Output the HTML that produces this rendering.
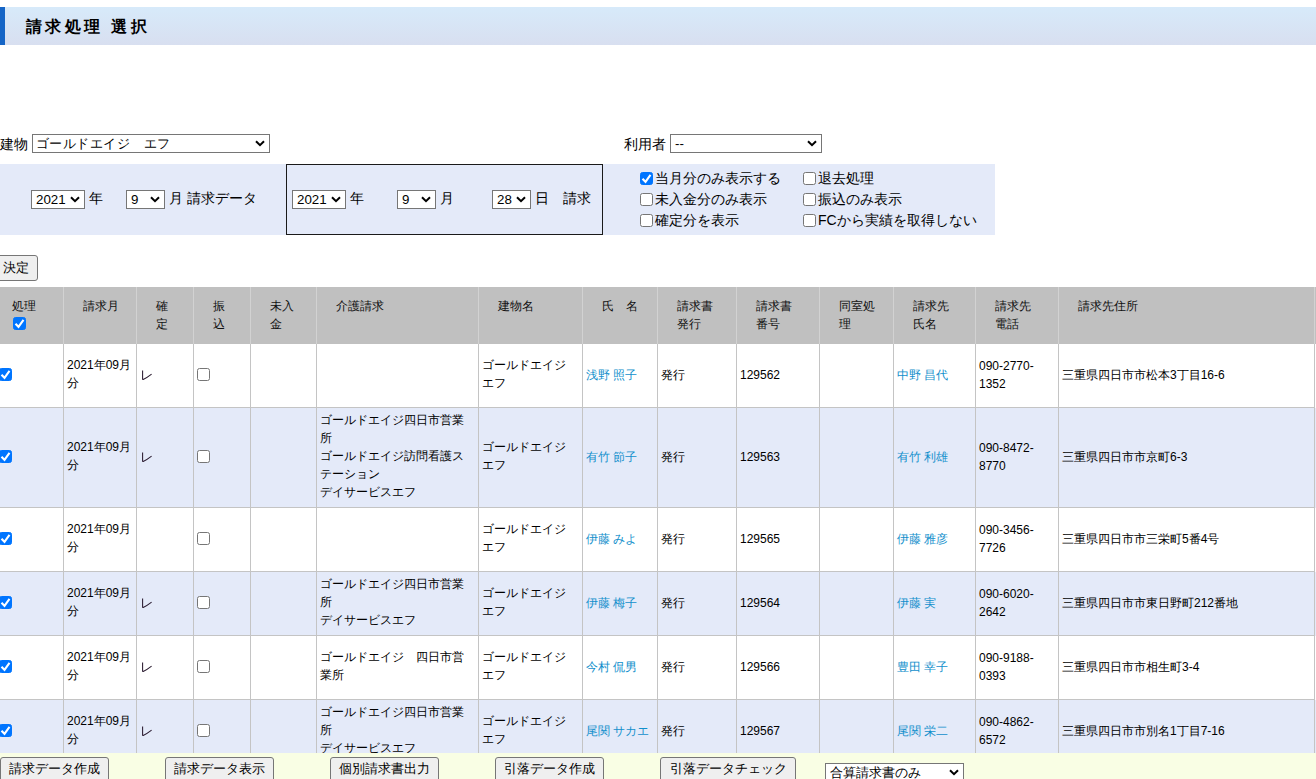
<!DOCTYPE html>
<html><head><meta charset="utf-8"><style>
html,body{margin:0;padding:0;background:#fff;width:1316px;height:779px;overflow:hidden;position:relative;
font-family:"Liberation Sans",sans-serif;color:#000}
.abs{position:absolute;white-space:nowrap}
.hdr{position:absolute;left:0;top:7px;width:1316px;height:38px;background:linear-gradient(#d7eafa,#d8dff0)}
.hdr .bar{position:absolute;left:0;top:0;width:5px;height:38px;background:#1565c6}
.hdr .t{position:absolute;left:26px;top:10px;font-size:16px;font-weight:bold;letter-spacing:3.4px;line-height:20px;color:#000}
.lbl{position:absolute;font-size:14px;line-height:20px;white-space:nowrap}
.sel{position:absolute;box-sizing:border-box;border:1px solid #767676;background:#fff;white-space:nowrap;overflow:hidden}
.sel .st{position:absolute;left:4px;top:0;line-height:17px}
.sel .chw{position:absolute;right:4px;top:5px;width:10px;height:7px}
.chev{display:block}
.panel{position:absolute;left:0;top:164px;width:995px;height:71px;background:#e4eaf9}
.box{position:absolute;left:286px;top:164px;width:317px;height:71px;box-sizing:border-box;border:1px solid #1a1a1a}
.cb{display:inline-block;box-sizing:border-box;width:13px;height:13px;border:1px solid #767676;border-radius:2.5px;background:#fff;vertical-align:top;position:relative}
.cb.on{background:#0075ff;border-color:#0075ff}
.cb svg{position:absolute;left:-1px;top:-1px}
.ck{position:absolute}
.btn{position:absolute;box-sizing:border-box;border:1px solid #767676;border-radius:3px;background:#efefef;font-size:13.33px;line-height:22px;height:26px;white-space:nowrap;text-align:center}
.tbl{position:absolute;left:0;top:0}
.row{position:absolute;left:0;width:1316px}
.cell{position:absolute;top:0;box-sizing:border-box;font-size:12px;line-height:18px;white-space:nowrap;overflow:hidden}
.hrow{background:#c0c0c0;color:#111}
.hrow .cell{border-right:1px solid #d2d2d2;height:57px;padding:10px 0 0 19px}
.hrow .cb{margin-top:2px;margin-left:1px}
.brow .cb{position:relative;top:1px}
.brow .cell{border-right:1px solid #c4c4c4;border-bottom:1px solid #c4c4c4;display:flex;align-items:center;padding-left:3px}
.brow .one{position:relative;top:-1px}
.brow .multi{position:relative;top:-2px}
.lk{color:#118fcc}
.re{color:#7a1080}
.foot{position:absolute;left:0;top:753px;width:1316px;height:26px;background:#f9fee4}
</style></head><body>

<div class="hdr"><div class="bar"></div><div class="t">請求処理 選択</div></div>
<div class="lbl" style="left:0px;top:134px">建物</div>
<div class="sel " style="left:32px;top:134px;width:238px;height:19px"><span class="st" style="font-size:13.33px"><span style="position:relative;left:-1px;letter-spacing:0.45px">ゴールドエイジ　エフ</span></span><span class="chw"><svg class="chev" width="10" height="7" viewBox="0 0 10 7"><path d="M1 1.2 L5 5.2 L9 1.2" fill="none" stroke="#000" stroke-width="2"/></svg></span></div>
<div class="lbl" style="left:624px;top:134px">利用者</div>
<div class="sel " style="left:670px;top:134px;width:152px;height:19px"><span class="st" style="font-size:13.33px">--</span><span class="chw"><svg class="chev" width="10" height="7" viewBox="0 0 10 7"><path d="M1 1.2 L5 5.2 L9 1.2" fill="none" stroke="#000" stroke-width="2"/></svg></span></div>
<div class="panel"></div><div class="box"></div>
<div class="sel " style="left:31px;top:190px;width:54px;height:19px"><span class="st" style="font-size:13.33px">2021</span><span class="chw"><svg class="chev" width="10" height="7" viewBox="0 0 10 7"><path d="M1 1.2 L5 5.2 L9 1.2" fill="none" stroke="#000" stroke-width="2"/></svg></span></div>
<div class="lbl" style="left:89px;top:188px">年</div>
<div class="sel " style="left:126px;top:190px;width:39px;height:19px"><span class="st" style="font-size:13.33px">9</span><span class="chw"><svg class="chev" width="10" height="7" viewBox="0 0 10 7"><path d="M1 1.2 L5 5.2 L9 1.2" fill="none" stroke="#000" stroke-width="2"/></svg></span></div>
<div class="lbl" style="left:169px;top:188px">月 請求データ</div>
<div class="sel " style="left:292px;top:190px;width:54px;height:19px"><span class="st" style="font-size:13.33px">2021</span><span class="chw"><svg class="chev" width="10" height="7" viewBox="0 0 10 7"><path d="M1 1.2 L5 5.2 L9 1.2" fill="none" stroke="#000" stroke-width="2"/></svg></span></div>
<div class="lbl" style="left:350px;top:188px">年</div>
<div class="sel " style="left:397px;top:190px;width:39px;height:19px"><span class="st" style="font-size:13.33px">9</span><span class="chw"><svg class="chev" width="10" height="7" viewBox="0 0 10 7"><path d="M1 1.2 L5 5.2 L9 1.2" fill="none" stroke="#000" stroke-width="2"/></svg></span></div>
<div class="lbl" style="left:440px;top:188px">月</div>
<div class="sel " style="left:492px;top:190px;width:39px;height:19px"><span class="st" style="font-size:13.33px">28</span><span class="chw"><svg class="chev" width="10" height="7" viewBox="0 0 10 7"><path d="M1 1.2 L5 5.2 L9 1.2" fill="none" stroke="#000" stroke-width="2"/></svg></span></div>
<div class="lbl" style="left:535px;top:188px">日</div>
<div class="lbl" style="left:563px;top:188px">請求</div>
<div class="ck" style="left:640px;top:172px"><span class="cb on"><svg width="13" height="13" viewBox="0 0 13 13"><path d="M2.5 6.8 L5.5 9.8 L10.5 2.9" fill="none" stroke="#fff" stroke-width="2.1"/></svg></span></div>
<div class="lbl" style="left:655px;top:168px">当月分のみ表示する</div>
<div class="ck" style="left:640px;top:193px"><span class="cb"></span></div>
<div class="lbl" style="left:655px;top:189px">未入金分のみ表示</div>
<div class="ck" style="left:640px;top:214px"><span class="cb"></span></div>
<div class="lbl" style="left:655px;top:210px">確定分を表示</div>
<div class="ck" style="left:803px;top:172px"><span class="cb"></span></div>
<div class="lbl" style="left:818px;top:168px">退去処理</div>
<div class="ck" style="left:803px;top:193px"><span class="cb"></span></div>
<div class="lbl" style="left:818px;top:189px">振込のみ表示</div>
<div class="ck" style="left:803px;top:214px"><span class="cb"></span></div>
<div class="lbl" style="left:818px;top:210px">FCから実績を取得しない</div>
<div class="btn" style="left:-6px;top:255px;width:44px;padding-left:8px;font-size:13.33px;line-height:24px;text-align:left">決定</div>
<div class="row hrow" style="top:287px;height:57px">
<div class="cell" style="left:-7px;width:71px">処理<br><span class="cb on"><svg width="13" height="13" viewBox="0 0 13 13"><path d="M2.5 6.8 L5.5 9.8 L10.5 2.9" fill="none" stroke="#fff" stroke-width="2.1"/></svg></span></div>
<div class="cell" style="left:64px;width:73px">請求月</div>
<div class="cell" style="left:137px;width:57px">確<br>定</div>
<div class="cell" style="left:194px;width:57px">振<br>込</div>
<div class="cell" style="left:251px;width:66px">未入<br>金</div>
<div class="cell" style="left:317px;width:162px">介護請求</div>
<div class="cell" style="left:479px;width:104px">建物名</div>
<div class="cell" style="left:583px;width:75px">氏　名</div>
<div class="cell" style="left:658px;width:79px">請求書<br>発行</div>
<div class="cell" style="left:737px;width:83px">請求書<br>番号</div>
<div class="cell" style="left:820px;width:74px">同室処<br>理</div>
<div class="cell" style="left:894px;width:82px">請求先<br>氏名</div>
<div class="cell" style="left:976px;width:83px">請求先<br>電話</div>
<div class="cell" style="left:1059px;width:256px">請求先住所</div>
</div>
<div class="row brow" style="top:344px;height:64px;background:#fff">
<div class="cell" style="left:-7px;width:71px;height:64px;padding-left:6px;"><div><span class="cb on"><svg width="13" height="13" viewBox="0 0 13 13"><path d="M2.5 6.8 L5.5 9.8 L10.5 2.9" fill="none" stroke="#fff" stroke-width="2.1"/></svg></span></div></div>
<div class="cell" style="left:64px;width:73px;height:64px;"><div class="multi">2021年09月<br>分</div></div>
<div class="cell" style="left:137px;width:57px;height:64px;"><div><span class="re"><svg width="12" height="12" viewBox="0 0 12 12" style="display:block;margin-top:1px"><path d="M2.6 0.5 V9.4 L3.2 9.5 Q7 7.8 11.6 4.2" fill="none" stroke="#2a1a30" stroke-width="1.05"/></svg></span></div></div>
<div class="cell" style="left:194px;width:57px;height:64px;padding-left:3px;"><div><span class="cb"></span></div></div>
<div class="cell" style="left:251px;width:66px;height:64px;"><div></div></div>
<div class="cell" style="left:317px;width:162px;height:64px;"><div></div></div>
<div class="cell" style="left:479px;width:104px;height:64px;"><div class="multi">ゴールドエイジ<br>エフ</div></div>
<div class="cell" style="left:583px;width:75px;height:64px;"><div class="one"><span class="lk">浅野 照子</span></div></div>
<div class="cell" style="left:658px;width:79px;height:64px;"><div class="one">発行</div></div>
<div class="cell" style="left:737px;width:83px;height:64px;"><div class="one">129562</div></div>
<div class="cell" style="left:820px;width:74px;height:64px;"><div></div></div>
<div class="cell" style="left:894px;width:82px;height:64px;"><div class="one"><span class="lk">中野 昌代</span></div></div>
<div class="cell" style="left:976px;width:83px;height:64px;"><div class="one">090-2770-<br>1352</div></div>
<div class="cell" style="left:1059px;width:256px;height:64px;"><div class="one">三重県四日市市松本3丁目16-6</div></div>
</div>
<div class="row brow" style="top:408px;height:100px;background:#e4eaf9">
<div class="cell" style="left:-7px;width:71px;height:100px;padding-left:6px;"><div><span class="cb on"><svg width="13" height="13" viewBox="0 0 13 13"><path d="M2.5 6.8 L5.5 9.8 L10.5 2.9" fill="none" stroke="#fff" stroke-width="2.1"/></svg></span></div></div>
<div class="cell" style="left:64px;width:73px;height:100px;"><div class="multi">2021年09月<br>分</div></div>
<div class="cell" style="left:137px;width:57px;height:100px;"><div><span class="re"><svg width="12" height="12" viewBox="0 0 12 12" style="display:block;margin-top:1px"><path d="M2.6 0.5 V9.4 L3.2 9.5 Q7 7.8 11.6 4.2" fill="none" stroke="#2a1a30" stroke-width="1.05"/></svg></span></div></div>
<div class="cell" style="left:194px;width:57px;height:100px;padding-left:3px;"><div><span class="cb"></span></div></div>
<div class="cell" style="left:251px;width:66px;height:100px;"><div></div></div>
<div class="cell" style="left:317px;width:162px;height:100px;"><div class="multi">ゴールドエイジ四日市営業<br>所<br>ゴールドエイジ訪問看護ス<br>テーション<br>デイサービスエフ</div></div>
<div class="cell" style="left:479px;width:104px;height:100px;"><div class="multi">ゴールドエイジ<br>エフ</div></div>
<div class="cell" style="left:583px;width:75px;height:100px;"><div class="one"><span class="lk">有竹 節子</span></div></div>
<div class="cell" style="left:658px;width:79px;height:100px;"><div class="one">発行</div></div>
<div class="cell" style="left:737px;width:83px;height:100px;"><div class="one">129563</div></div>
<div class="cell" style="left:820px;width:74px;height:100px;"><div></div></div>
<div class="cell" style="left:894px;width:82px;height:100px;"><div class="one"><span class="lk">有竹 利雄</span></div></div>
<div class="cell" style="left:976px;width:83px;height:100px;"><div class="one">090-8472-<br>8770</div></div>
<div class="cell" style="left:1059px;width:256px;height:100px;"><div class="one">三重県四日市市京町6-3</div></div>
</div>
<div class="row brow" style="top:508px;height:64px;background:#fff">
<div class="cell" style="left:-7px;width:71px;height:64px;padding-left:6px;"><div><span class="cb on"><svg width="13" height="13" viewBox="0 0 13 13"><path d="M2.5 6.8 L5.5 9.8 L10.5 2.9" fill="none" stroke="#fff" stroke-width="2.1"/></svg></span></div></div>
<div class="cell" style="left:64px;width:73px;height:64px;"><div class="multi">2021年09月<br>分</div></div>
<div class="cell" style="left:137px;width:57px;height:64px;"><div></div></div>
<div class="cell" style="left:194px;width:57px;height:64px;padding-left:3px;"><div><span class="cb"></span></div></div>
<div class="cell" style="left:251px;width:66px;height:64px;"><div></div></div>
<div class="cell" style="left:317px;width:162px;height:64px;"><div></div></div>
<div class="cell" style="left:479px;width:104px;height:64px;"><div class="multi">ゴールドエイジ<br>エフ</div></div>
<div class="cell" style="left:583px;width:75px;height:64px;"><div class="one"><span class="lk">伊藤 みよ</span></div></div>
<div class="cell" style="left:658px;width:79px;height:64px;"><div class="one">発行</div></div>
<div class="cell" style="left:737px;width:83px;height:64px;"><div class="one">129565</div></div>
<div class="cell" style="left:820px;width:74px;height:64px;"><div></div></div>
<div class="cell" style="left:894px;width:82px;height:64px;"><div class="one"><span class="lk">伊藤 雅彦</span></div></div>
<div class="cell" style="left:976px;width:83px;height:64px;"><div class="one">090-3456-<br>7726</div></div>
<div class="cell" style="left:1059px;width:256px;height:64px;"><div class="one">三重県四日市市三栄町5番4号</div></div>
</div>
<div class="row brow" style="top:572px;height:64px;background:#e4eaf9">
<div class="cell" style="left:-7px;width:71px;height:64px;padding-left:6px;"><div><span class="cb on"><svg width="13" height="13" viewBox="0 0 13 13"><path d="M2.5 6.8 L5.5 9.8 L10.5 2.9" fill="none" stroke="#fff" stroke-width="2.1"/></svg></span></div></div>
<div class="cell" style="left:64px;width:73px;height:64px;"><div class="multi">2021年09月<br>分</div></div>
<div class="cell" style="left:137px;width:57px;height:64px;"><div><span class="re"><svg width="12" height="12" viewBox="0 0 12 12" style="display:block;margin-top:1px"><path d="M2.6 0.5 V9.4 L3.2 9.5 Q7 7.8 11.6 4.2" fill="none" stroke="#2a1a30" stroke-width="1.05"/></svg></span></div></div>
<div class="cell" style="left:194px;width:57px;height:64px;padding-left:3px;"><div><span class="cb"></span></div></div>
<div class="cell" style="left:251px;width:66px;height:64px;"><div></div></div>
<div class="cell" style="left:317px;width:162px;height:64px;"><div class="multi">ゴールドエイジ四日市営業<br>所<br>デイサービスエフ</div></div>
<div class="cell" style="left:479px;width:104px;height:64px;"><div class="multi">ゴールドエイジ<br>エフ</div></div>
<div class="cell" style="left:583px;width:75px;height:64px;"><div class="one"><span class="lk">伊藤 梅子</span></div></div>
<div class="cell" style="left:658px;width:79px;height:64px;"><div class="one">発行</div></div>
<div class="cell" style="left:737px;width:83px;height:64px;"><div class="one">129564</div></div>
<div class="cell" style="left:820px;width:74px;height:64px;"><div></div></div>
<div class="cell" style="left:894px;width:82px;height:64px;"><div class="one"><span class="lk">伊藤 実</span></div></div>
<div class="cell" style="left:976px;width:83px;height:64px;"><div class="one">090-6020-<br>2642</div></div>
<div class="cell" style="left:1059px;width:256px;height:64px;"><div class="one">三重県四日市市東日野町212番地</div></div>
</div>
<div class="row brow" style="top:636px;height:64px;background:#fff">
<div class="cell" style="left:-7px;width:71px;height:64px;padding-left:6px;"><div><span class="cb on"><svg width="13" height="13" viewBox="0 0 13 13"><path d="M2.5 6.8 L5.5 9.8 L10.5 2.9" fill="none" stroke="#fff" stroke-width="2.1"/></svg></span></div></div>
<div class="cell" style="left:64px;width:73px;height:64px;"><div class="multi">2021年09月<br>分</div></div>
<div class="cell" style="left:137px;width:57px;height:64px;"><div><span class="re"><svg width="12" height="12" viewBox="0 0 12 12" style="display:block;margin-top:1px"><path d="M2.6 0.5 V9.4 L3.2 9.5 Q7 7.8 11.6 4.2" fill="none" stroke="#2a1a30" stroke-width="1.05"/></svg></span></div></div>
<div class="cell" style="left:194px;width:57px;height:64px;padding-left:3px;"><div><span class="cb"></span></div></div>
<div class="cell" style="left:251px;width:66px;height:64px;"><div></div></div>
<div class="cell" style="left:317px;width:162px;height:64px;"><div class="multi">ゴールドエイジ　四日市営<br>業所</div></div>
<div class="cell" style="left:479px;width:104px;height:64px;"><div class="multi">ゴールドエイジ<br>エフ</div></div>
<div class="cell" style="left:583px;width:75px;height:64px;"><div class="one"><span class="lk">今村 侃男</span></div></div>
<div class="cell" style="left:658px;width:79px;height:64px;"><div class="one">発行</div></div>
<div class="cell" style="left:737px;width:83px;height:64px;"><div class="one">129566</div></div>
<div class="cell" style="left:820px;width:74px;height:64px;"><div></div></div>
<div class="cell" style="left:894px;width:82px;height:64px;"><div class="one"><span class="lk">豊田 幸子</span></div></div>
<div class="cell" style="left:976px;width:83px;height:64px;"><div class="one">090-9188-<br>0393</div></div>
<div class="cell" style="left:1059px;width:256px;height:64px;"><div class="one">三重県四日市市相生町3-4</div></div>
</div>
<div class="row brow" style="top:700px;height:64px;background:#e4eaf9">
<div class="cell" style="left:-7px;width:71px;height:64px;padding-left:6px;"><div><span class="cb on"><svg width="13" height="13" viewBox="0 0 13 13"><path d="M2.5 6.8 L5.5 9.8 L10.5 2.9" fill="none" stroke="#fff" stroke-width="2.1"/></svg></span></div></div>
<div class="cell" style="left:64px;width:73px;height:64px;"><div class="multi">2021年09月<br>分</div></div>
<div class="cell" style="left:137px;width:57px;height:64px;"><div><span class="re"><svg width="12" height="12" viewBox="0 0 12 12" style="display:block;margin-top:1px"><path d="M2.6 0.5 V9.4 L3.2 9.5 Q7 7.8 11.6 4.2" fill="none" stroke="#2a1a30" stroke-width="1.05"/></svg></span></div></div>
<div class="cell" style="left:194px;width:57px;height:64px;padding-left:3px;"><div><span class="cb"></span></div></div>
<div class="cell" style="left:251px;width:66px;height:64px;"><div></div></div>
<div class="cell" style="left:317px;width:162px;height:64px;"><div class="multi">ゴールドエイジ四日市営業<br>所<br>デイサービスエフ</div></div>
<div class="cell" style="left:479px;width:104px;height:64px;"><div class="multi">ゴールドエイジ<br>エフ</div></div>
<div class="cell" style="left:583px;width:75px;height:64px;"><div class="one"><span class="lk">尾関 サカエ</span></div></div>
<div class="cell" style="left:658px;width:79px;height:64px;"><div class="one">発行</div></div>
<div class="cell" style="left:737px;width:83px;height:64px;"><div class="one">129567</div></div>
<div class="cell" style="left:820px;width:74px;height:64px;"><div></div></div>
<div class="cell" style="left:894px;width:82px;height:64px;"><div class="one"><span class="lk">尾関 栄二</span></div></div>
<div class="cell" style="left:976px;width:83px;height:64px;"><div class="one">090-4862-<br>6572</div></div>
<div class="cell" style="left:1059px;width:256px;height:64px;"><div class="one">三重県四日市市別名1丁目7-16</div></div>
</div>
<div class="foot"></div>
<div class="btn" style="left:0px;top:757px;width:109px">請求データ作成</div>
<div class="btn" style="left:165px;top:757px;width:109px">請求データ表示</div>
<div class="btn" style="left:330px;top:757px;width:109px">個別請求書出力</div>
<div class="btn" style="left:495px;top:757px;width:109px">引落データ作成</div>
<div class="btn" style="left:660px;top:757px;width:136px">引落データチェック</div>
<div class="sel " style="left:825px;top:763px;width:139px;height:22px"><span class="st" style="font-size:13.33px">合算請求書のみ</span><span class="chw"><svg class="chev" width="10" height="7" viewBox="0 0 10 7"><path d="M1 1.2 L5 5.2 L9 1.2" fill="none" stroke="#000" stroke-width="2"/></svg></span></div>
</body></html>
